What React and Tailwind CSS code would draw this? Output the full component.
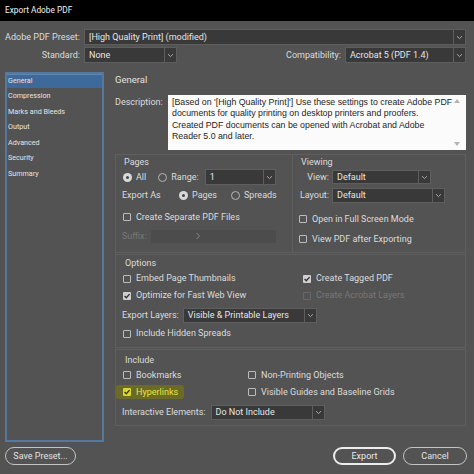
import React from "react";

const Chevron = () => (
  <svg width="7" height="5" viewBox="0 0 7 5">
    <path d="M1 1.2 L3.5 3.6 L6 1.2" fill="none" stroke="#a9a9a9" strokeWidth="1" />
  </svg>
);

function Dropdown({ value, className = "" }) {
  return (
    <div className={`flex border border-[#5e5e5e] bg-[#393939] ${className}`}>
      <div className="flex-1 flex items-center pl-[4px] text-[#e6e6e6] whitespace-nowrap overflow-hidden">
        {value}
      </div>
      <div className="w-[12px] border-l border-[#5e5e5e] flex items-center justify-center">
        <Chevron />
      </div>
    </div>
  );
}

const Check = ({ color = "#333" }) => (
  <svg width="8" height="8" viewBox="0 0 8 8">
    <path d="M1.6 4.1 L3.3 5.8 L6.6 2.1" fill="none" stroke={color} strokeWidth="1.4" />
  </svg>
);

function Checkbox({ checked, disabled, label, yellow }) {
  let box;
  if (checked && yellow) {
    box = (
      <div className="w-[8px] h-[8px] rounded-[1px] bg-[#d9d62e] flex items-center justify-center">
        <Check color="#3a3a10" />
      </div>
    );
  } else if (checked) {
    box = (
      <div className="w-[8px] h-[8px] rounded-[1px] bg-[#cfcfcf] flex items-center justify-center">
        <Check />
      </div>
    );
  } else {
    box = (
      <div
        className={`w-[8px] h-[8px] rounded-[1px] border ${
          disabled ? "border-[#676767]" : "border-[#bcbcbc]"
        }`}
      />
    );
  }
  return (
    <div className="flex items-center gap-[5px] h-full">
      {box}
      <span
        className={`whitespace-nowrap ${
          yellow ? "text-[#e8e43c]" : disabled ? "text-[#777777]" : ""
        }`}
      >
        {label}
      </span>
    </div>
  );
}

function Radio({ selected, label }) {
  return (
    <div className="flex items-center gap-[4px]">
      {selected ? (
        <div className="w-[9px] h-[9px] rounded-full bg-[#d9d9d9] flex items-center justify-center">
          <div className="w-[3px] h-[3px] rounded-full bg-[#444]" />
        </div>
      ) : (
        <div className="w-[9px] h-[9px] rounded-full border border-[#b5b5b5]" />
      )}
      <span className="whitespace-nowrap">{label}</span>
    </div>
  );
}

const sideItems = ["Compression", "Marks and Bleeds", "Output", "Advanced", "Security", "Summary"];

export default function App() {
  return (
    <div className="w-[474px] h-[474px] overflow-hidden bg-[#535353] flex flex-col text-[9px] text-[#dcdcdc] font-['Roboto','Liberation_Sans',Arial,sans-serif] leading-none">
      {/* Title bar */}
      <div className="h-[21px] bg-black flex items-center pl-[5px] text-[8.3px] text-[#f2f2f2]">
        Export Adobe PDF
      </div>

      {/* Preset rows */}
      <div className="pt-[8px] pr-[8px] flex flex-col gap-[2px]">
        <div className="flex items-center h-[16px]">
          <div className="w-[80px] text-right">Adobe PDF Preset:</div>
          <Dropdown value="[High Quality Print] (modified)" className="ml-[4px] flex-1 h-[16px]" />
        </div>
        <div className="flex items-center h-[16px]">
          <div className="w-[80px] text-right">Standard:</div>
          <Dropdown value="None" className="ml-[4px] w-[93px] h-[16px]" />
          <div className="ml-auto flex items-center">
            <div>Compatibility:</div>
            <Dropdown value="Acrobat 5 (PDF 1.4)" className="ml-[4px] w-[121px] h-[16px]" />
          </div>
        </div>
      </div>

      {/* Body */}
      <div className="mt-[9px] flex">
        {/* Sidebar */}
        <div className="ml-[5px] w-[99px] h-[370px] border-2 border-[#56789d] flex flex-col text-[7.2px] text-[#e4e4e4]">
          <div className="h-[14px] pb-[2px] bg-[#3e6a9b] border-t border-[#5d86b3] flex items-center pl-[1px]">
            General
          </div>
          {sideItems.map((s) => (
            <div key={s} className="h-[15.5px] flex items-center pl-[1px]">
              {s}
            </div>
          ))}
        </div>

        {/* Main */}
        <div className="ml-[11px] w-[351px] flex flex-col">
          <div className="h-[16px] flex items-center text-[9.5px] text-[#e2e2e2]">General</div>

          {/* Description */}
          <div className="mt-[7px] flex">
            <div className="w-[53px] pt-[3px]">Description:</div>
            <div className="relative w-[298px] h-[55px] bg-[#fbfbfb] text-[#1e1e1e] pl-[4px] pt-[1.5px] leading-[11.5px] text-[8.8px] font-['Liberation_Sans',Arial,sans-serif]">
              <div className="whitespace-nowrap">[Based on '[High Quality Print]'] Use these settings to create Adobe PDF</div>
              <div className="whitespace-nowrap">documents for quality printing on desktop printers and proofers.</div>
              <div className="whitespace-nowrap">Created PDF documents can be opened with Acrobat and Adobe</div>
              <div className="whitespace-nowrap">Reader 5.0 and later.</div>
              <svg className="absolute right-[6px] top-[4px]" width="6" height="4" viewBox="0 0 6 4">
                <path d="M0 4 L3 0 L6 4 Z" fill="#b4b4b4" />
              </svg>
              <svg className="absolute right-[6px] bottom-[4px]" width="6" height="4" viewBox="0 0 6 4">
                <path d="M0 0 L3 4 L6 0 Z" fill="#b4b4b4" />
              </svg>
            </div>
          </div>

          {/* Pages / Viewing */}
          <div className="mt-[4px] flex h-[99px]">
            <div className="w-[178px] border border-[#5f5f5f] flex flex-col">
              <div className="h-[14px] flex items-center pl-[8px]">Pages</div>
              <div className="h-[16px] flex items-center pl-[7px]">
                <Radio selected label="All" />
                <div className="ml-[12px]">
                  <Radio label="Range:" />
                </div>
                <Dropdown value="1" className="ml-[6px] w-[71px] h-[16px]" />
              </div>
              <div className="mt-[2px] h-[16px] flex items-center pl-[6px]">
                <div className="w-[57px]">Export As</div>
                <Radio selected label="Pages" />
                <div className="ml-[14px]">
                  <Radio label="Spreads" />
                </div>
              </div>
              <div className="mt-[6px] h-[16px] pl-[7px]">
                <Checkbox label="Create Separate PDF Files" />
              </div>
              <div className="mt-[4px] h-[14px] flex items-center pl-[6px]">
                <div className="text-[#777777] w-[29px]">Suffix:</div>
                <div className="relative w-[125px] h-[13px] bg-[#4c4c4c]">
                  <svg className="absolute left-[45px] top-[3px]" width="4" height="6" viewBox="0 0 4 6">
                    <path d="M0.5 0 L3.5 3 L0.5 6" fill="none" stroke="#8a8a8a" strokeWidth="1" />
                  </svg>
                </div>
              </div>
            </div>
            <div className="-ml-px w-[174px] border border-[#5f5f5f] flex flex-col">
              <div className="h-[14px] flex items-center pl-[8px]">Viewing</div>
              <div className="h-[16px] flex items-center pl-[6px]">
                <div className="w-[30px] text-right">View:</div>
                <Dropdown value="Default" className="ml-[3px] w-[99px] h-[14px]" />
              </div>
              <div className="mt-[2px] h-[16px] flex items-center pl-[6px]">
                <div className="w-[30px] text-right">Layout:</div>
                <Dropdown value="Default" className="ml-[3px] w-[113px] h-[15px]" />
              </div>
              <div className="mt-[8px] h-[16px] pl-[6px]">
                <Checkbox label="Open in Full Screen Mode" />
              </div>
              <div className="mt-[4px] h-[16px] pl-[6px]">
                <Checkbox label="View PDF after Exporting" />
              </div>
            </div>
          </div>

          {/* Options */}
          <div className="mt-[1px] h-[94px] border border-[#5f5f5f] flex flex-col">
            <div className="h-[16px] flex items-center pl-[9px]">Options</div>
            <div className="h-[15px] flex pl-[7px]">
              <div className="w-[180px]">
                <Checkbox label="Embed Page Thumbnails" />
              </div>
              <Checkbox checked label="Create Tagged PDF" />
            </div>
            <div className="mt-[2px] h-[15px] flex pl-[7px]">
              <div className="w-[180px]">
                <Checkbox checked label="Optimize for Fast Web View" />
              </div>
              <Checkbox disabled label="Create Acrobat Layers" />
            </div>
            <div className="mt-[4px] h-[16px] flex items-center pl-[6px]">
              <div>Export Layers:</div>
              <Dropdown value="Visible & Printable Layers" className="ml-[4px] w-[134px] h-[15px]" />
            </div>
            <div className="mt-[3px] h-[15px] pl-[7px]">
              <Checkbox label="Include Hidden Spreads" />
            </div>
          </div>

          {/* Include */}
          <div className="mt-[1px] h-[77px] border border-[#5f5f5f] flex flex-col">
            <div className="mt-[2px] h-[16px] flex items-center pl-[9px]">Include</div>
            <div className="h-[14px] flex pl-[7px]">
              <div className="w-[125px]">
                <Checkbox label="Bookmarks" />
              </div>
              <Checkbox label="Non-Printing Objects" />
            </div>
            <div className="mt-[2px] h-[16px] flex items-center pl-[7px]">
              <div className="w-[125px] flex">
                <div className="-ml-[7px] pl-[7px] pr-[6px] h-[14px] bg-[#6c6a27] rounded-[3px]">
                  <Checkbox checked yellow label="Hyperlinks" />
                </div>
              </div>
              <div className="h-[14px]">
                <Checkbox label="Visible Guides and Baseline Grids" />
              </div>
            </div>
            <div className="mt-[4px] h-[16px] flex items-center pl-[6px]">
              <div>Interactive Elements:</div>
              <Dropdown value="Do Not Include" className="ml-[5px] w-[114px] h-[15px]" />
            </div>
          </div>
        </div>
      </div>

      {/* Bottom buttons */}
      <div className="mt-[5px] flex h-[18px]">
        <div className="ml-[5px] w-[71px] h-[18px] rounded-full border border-[#c4c4c4] flex items-center justify-center text-[#e2e2e2]">
          Save Preset...
        </div>
        <div className="ml-auto w-[63px] h-[18px] rounded-full border-2 border-[#ececec] flex items-center justify-center text-[#e8e8e8]">
          Export
        </div>
        <div className="ml-[7px] mr-[7px] w-[64px] h-[18px] rounded-full border border-[#c4c4c4] flex items-center justify-center text-[#e2e2e2]">
          Cancel
        </div>
      </div>
    </div>
  );
}
